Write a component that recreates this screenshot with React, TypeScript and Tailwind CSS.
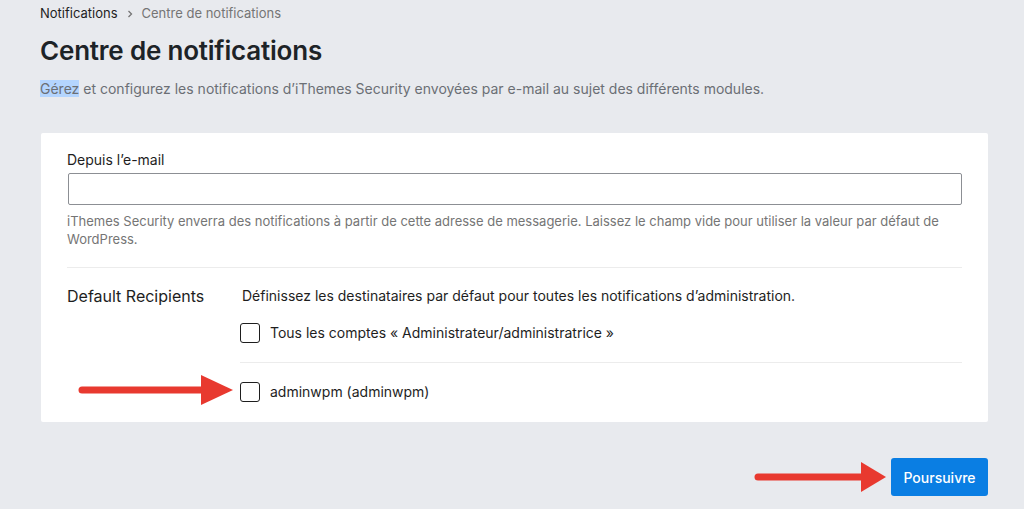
import React from 'react'

function RedArrow({ width, head }: { width: number; head: number }) {
  return (
    <svg width={width} height="32" viewBox={`0 0 ${width} 32`} className="block">
      <line x1="4" y1="16" x2={width - head + 2} y2="16" stroke="#e8392f" strokeWidth="7" strokeLinecap="round" />
      <polygon points={`${width - head},1 ${width},16 ${width - head},31`} fill="#e8392f" />
    </svg>
  )
}

function Checkbox() {
  return <span className="block w-[20px] h-[20px] rounded-[3px] border-[1.5px] border-[#1e1e1e] bg-white shrink-0" />
}

export default function App() {
  return (
    <div
      className="relative w-[1024px] h-[509px] bg-[#e8eaee] text-[#1e1e1e] overflow-hidden"
      style={{ fontFamily: 'Inter, "Liberation Sans", sans-serif' }}
    >
      <div className="pl-[40px] pr-[36px] pt-[5px]">
        {/* breadcrumb */}
        <div className="flex items-center gap-[7px] text-[13px] h-[18px]">
          <span className="text-[#1e1e1e]">Notifications</span>
          <svg width="10" height="10" viewBox="0 0 10 10">
            <path d="M3.5 2 L6.5 5 L3.5 8" fill="none" stroke="#757575" strokeWidth="1.3" />
          </svg>
          <span className="text-[#757575]">Centre de notifications</span>
        </div>

        <h1 className="mt-[11px] text-[26px] leading-[34px] font-semibold tracking-[-0.2px] text-[#1d2327]">
          Centre de notifications
        </h1>

        <p className="mt-[11px] text-[14px] leading-[20px] text-[#6b6f75]">
          <span className="bg-[#b4d5fe]">Gérez</span> et configurez les notifications d’iThemes Security envoyées par e-mail au sujet des différents modules.
        </p>

        {/* card */}
        <div className="mt-[34px] ml-[1px] w-[947px] bg-white rounded-[2px] px-[26px] pt-[18px] pb-[20px]">
          <label className="block text-[14px] leading-[18px] text-[#1e1e1e]">Depuis l’e-mail</label>
          <div className="mt-[4px] ml-[1px] h-[32px] w-[894px] border border-[#8c8f94] rounded-[2px]" />
          <p className="mt-[7px] text-[13px] leading-[18px] text-[#757575]">
            iThemes Security enverra des notifications à partir de cette adresse de messagerie. Laissez le champ vide pour utiliser la valeur par défaut de WordPress.
          </p>
          <div className="mt-[19px] h-px w-[895px] bg-[#ececec]" />

          <div className="flex mt-[18px]">
            <div className="w-[173px] text-[16px] leading-[20px] text-[#1e1e1e]">Default Recipients</div>
            <div className="flex-1">
              <p className="pl-[2px] text-[14px] leading-[20px] text-[#1e1e1e]">
                Définissez les destinataires par défaut pour toutes les notifications d’administration.
              </p>
              <div className="mt-[16px] flex items-center gap-[10px]">
                <Checkbox />
                <span className="text-[14px] text-[#1e1e1e]">Tous les comptes « Administrateur/administratrice »</span>
              </div>
              <div className="mt-[19px] h-px w-[722px] bg-[#ececec]" />
              <div className="mt-[18px] flex items-center gap-[10px]">
                <Checkbox />
                <span className="text-[14px] text-[#1e1e1e]">adminwpm (adminwpm)</span>
              </div>
            </div>
          </div>
        </div>

        <div className="flex justify-end mt-[36px]">
          <button className="h-[38px] w-[97px] rounded-[3px] bg-[#0a7ee3] text-white text-[14px] font-medium">
            Poursuivre
          </button>
        </div>
      </div>

      {/* annotation arrows */}
      <div className="absolute left-[78px] top-[374px]">
        <RedArrow width={155} head={32} />
      </div>
      <div className="absolute left-[754px] top-[461px]">
        <RedArrow width={132} head={25} />
      </div>
    </div>
  )
}
